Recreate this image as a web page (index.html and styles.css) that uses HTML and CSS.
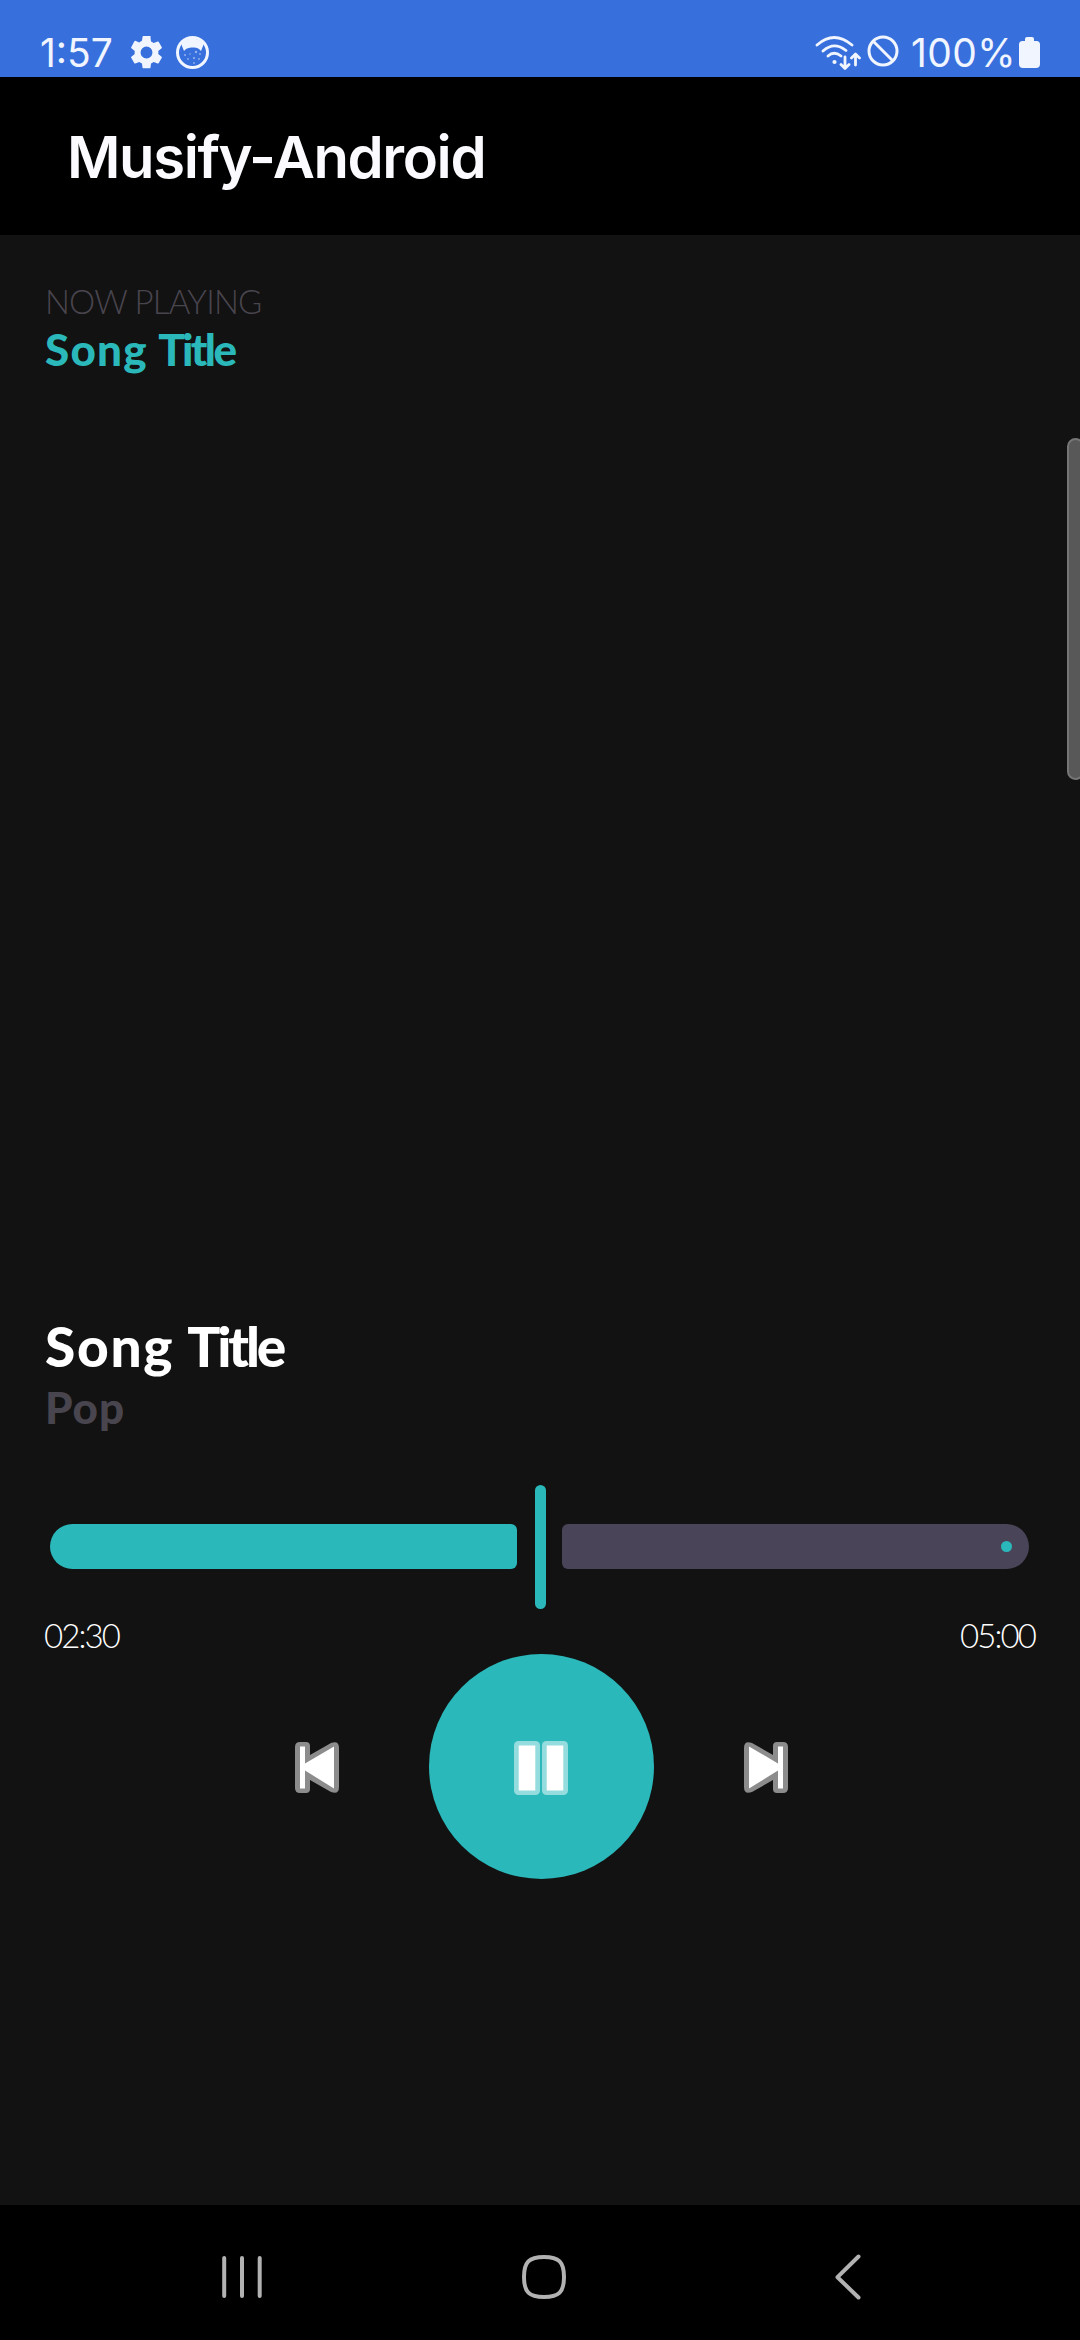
FILE: index.html
```html
<!DOCTYPE html>
<html lang="en">
<head>
<meta charset="utf-8">
<title>Musify-Android</title>
<link rel="stylesheet" href="styles.css">
</head>
<body>
<div class="screen">
  <div class="status">
    <span class="clock">1:57</span>
    <svg class="gear" width="33" height="33" viewBox="2 2 20 20"><path fill="currentColor" d="M19.14 12.94c.04-.3.06-.61.06-.94s-.02-.64-.07-.94l2.03-1.58a.49.49 0 0 0 .12-.61l-1.92-3.32a.49.49 0 0 0-.59-.22l-2.39.96a7 7 0 0 0-1.62-.94l-.36-2.54A.48.48 0 0 0 13.92 2h-3.84c-.24 0-.43.17-.47.41l-.36 2.54c-.59.24-1.13.57-1.62.94l-2.39-.96a.48.48 0 0 0-.59.22L2.74 8.87a.48.48 0 0 0 .12.61l2.03 1.58c-.05.3-.09.63-.09.94s.02.64.07.94l-2.03 1.58a.49.49 0 0 0-.12.61l1.92 3.32c.12.22.37.29.59.22l2.39-.96c.5.38 1.03.7 1.62.94l.36 2.54c.05.24.24.41.48.41h3.84c.24 0 .44-.17.47-.41l.36-2.54a7 7 0 0 0 1.62-.94l2.39.96c.22.08.47 0 .59-.22l1.92-3.32a.48.48 0 0 0-.12-.61zM12 15.6a3.6 3.6 0 1 1 0-7.2 3.6 3.6 0 0 1 0 7.2z"/></svg>
    <svg class="cat" width="33" height="33" viewBox="0 0 33 33"><circle cx="16.5" cy="16.5" r="15" fill="none" stroke="currentColor" stroke-width="3"/><path fill="currentColor" d="M5 7Q16 -2 28 7L27 10 25 15 23 13Q21 11 17 11.500Q13 11 10 13L8 15 6 10z"/><g fill="currentColor" opacity=".5"><circle cx="9" cy="19" r="1"/><circle cx="14" cy="18" r=".8"/><circle cx="20" cy="16" r="1.200"/><circle cx="24" cy="18" r=".9"/><circle cx="18" cy="22" r="1.100"/><circle cx="12" cy="23" r=".9"/><circle cx="23" cy="23" r=".9"/><circle cx="18" cy="27" r=".9"/></g></svg>
    <svg class="wifi" width="46" height="36" viewBox="0 0 46 36" fill="none" stroke="currentColor" stroke-width="2.800" stroke-linecap="round" stroke-linejoin="round"><path d="M2 10Q19 -5 37 10M8 16Q19 6 31 15.500M13 21Q19 15.500 26 21M30 22V33M26 29.500l4 4 4-4M40.500 30V19.500M36.500 23l4-4 4 4"/><circle cx="19.500" cy="27" r="2.100" fill="currentColor" stroke="none"/></svg>
    <svg class="ban" width="32" height="32" viewBox="0 0 32 32" fill="none" stroke="currentColor" stroke-width="3"><circle cx="16" cy="16" r="14"/><path d="M6 6l20 20"/></svg>
    <span class="percent">100%</span>
    <svg class="battery" width="21" height="31" viewBox="0 0 21 31"><path fill="currentColor" d="M6 4V2Q6 0 8 0h5q2 0 2 2v2h2.500Q21 4 21 7.500V27q0 4-4 4H4q-4 0-4-4V7.500Q0 4 3.500 4z"/></svg>
  </div>
  <header class="appbar"><h1>Musify-Android</h1></header>
  <main class="player">
    <div class="edge-handle"></div>
    <div class="now">NOW PLAYING</div>
    <div class="now-title"><span class="wide">Song</span> <span class="tight">Title</span></div>
    <div class="artwork"></div>
    <h2 class="song"><span class="wide">Song</span> <span class="tight">Title</span></h2>
    <div class="genre">Pop</div>
    <div class="slider">
      <div class="track played"></div>
      <div class="thumb"></div>
      <div class="track rest"><i class="stop"></i></div>
    </div>
    <div class="times"><span class="elapsed">02:30</span><span class="total">05:00</span></div>
    <div class="controls">
      <svg width="44" height="51" viewBox="0 0 44 51"><path fill="#8c8c8c" d="M5 0h6q4 0 4 4v9L36 1q8-3 8 5v39q0 8-8 5L15 38v9q0 4-4 4H5q-5 0-5-5V5q0-5 5-5z"/><path fill="#fff" d="M5 4.500h5v17L39 4.500v42L10 28.500v18H5z"/></svg>
      <div class="pause">
        <svg width="54" height="54" viewBox="0 0 54 54"><g fill="#94dcdd"><rect width="26" height="54" rx="4.500"/><rect x="28" width="26" height="54" rx="4.500"/></g><path fill="#fff" d="M4.700 4.500h16.600v45H4.700zM32.700 4.500h16.600v45H32.700z"/></svg>
      </div>
      <svg width="44" height="51" viewBox="0 0 44 51"><g transform="matrix(-1 0 0 1 44 0)"><path fill="#8c8c8c" d="M5 0h6q4 0 4 4v9L36 1q8-3 8 5v39q0 8-8 5L15 38v9q0 4-4 4H5q-5 0-5-5V5q0-5 5-5z"/><path fill="#fff" d="M5 4.500h5v17L39 4.500v42L10 28.500v18H5z"/></g></svg>
    </div>
  </main>
  <nav class="navbar">
    <svg width="40" height="44" viewBox="0 0 40 44"><path d="M2.200 3v38M20 3v38M37.700 3v38"/></svg>
    <svg width="44" height="44" viewBox="0 0 44 44"><path d="M22 2C37 2 42 7 42 22S37 42 22 42 2 37 2 22 7 2 22 2z"/></svg>
    <svg class="back" width="26" height="46" viewBox="0 0 26 46"><path d="M23.500 2.500L2.500 23.200l21 20.300"/></svg>
  </nav>
</div>
</body>
</html>
```
FILE: styles.css
```css
* { box-sizing: border-box; }
body { margin: 0; background: #000; }
svg { display: block; flex: none; }
.screen {
  width: 1080px;
  height: 2340px;
  display: flex;
  flex-direction: column;
  background: #121212;
  overflow: hidden;
}
.status {
  flex: none;
  height: 77px;
  padding: 28px 40px 0 40px;
  display: flex;
  align-items: center;
  background: #376fdd;
  color: #f0f5ff;
  font: 400 39px/48px Inter, sans-serif;
}
.clock { width: 90px; letter-spacing: 0; white-space: nowrap; }
.gear { margin-right: 13px; }
.wifi { margin-left: auto; margin-right: 6px; }
.ban { margin-top: -3px; margin-right: 12px; }
.percent { width: 108px; letter-spacing: 0.4px; white-space: nowrap; }
.appbar {
  flex: none;
  height: 158px;
  padding: 2px 0 0 67px;
  display: flex;
  align-items: center;
  background: #000;
}
.appbar h1 {
  margin: 0;
  color: #fbfaff;
  font: 600 58px/72px Inter, sans-serif;
  letter-spacing: -1.4px;
}
.player {
  position: relative;
  flex: 1;
  padding: 42px 45px 0;
  display: flex;
  flex-direction: column;
  font-family: Lato, sans-serif;
  color: #fff;
}
.edge-handle {
  position: absolute;
  right: -4px;
  top: 203px;
  width: 17px;
  height: 342px;
  border: 2px solid #767676;
  border-radius: 12px;
  background: #585858;
}
.now { font-size: 33px; line-height: 48px; font-weight: 300; letter-spacing: -0.8px; color: #49454f; }
.now-title { margin-top: -1px; font-size: 44px; line-height: 50px; font-weight: 900; color: #2bb8ba; }
.now-title .wide { letter-spacing: 1.2px; }
.now-title .tight { letter-spacing: -2.6px; }
.artwork { height: 942px; }
.song { margin: 0; font-size: 55px; line-height: 60px; font-weight: 900; }
.song .wide { letter-spacing: 1.7px; }
.song .tight { letter-spacing: -3.1px; }
.genre { margin-top: 6px; font-size: 44px; line-height: 50px; font-weight: 900; letter-spacing: 1px; color: #49454f; }
.slider {
  margin: 53px 6px 0 5px;
  height: 124px;
  display: flex;
  align-items: center;
}
.track { width: 467px; height: 45px; margin-bottom: 1px; }
.played { background: #2bb8ba; border-radius: 22.5px 6px 6px 22.5px; }
.rest {
  background: #4a4458;
  border-radius: 6px 22.5px 22.5px 6px;
  display: flex;
  align-items: center;
  justify-content: flex-end;
  padding-right: 17px;
}
.stop { width: 11px; height: 11px; border-radius: 50%; background: #2bb8ba; }
.thumb { width: 11px; height: 124px; margin: 0 16px 0 18px; border-radius: 6px; background: #2bb8ba; }
.times {
  margin-top: 6px;
  display: flex;
  justify-content: space-between;
  font-size: 33px;
  line-height: 40px;
  font-weight: 300;
  letter-spacing: -1.9px;
}
.elapsed { margin-left: -1px; }
.total { margin-right: 0; }
.controls { margin-top: -1px; display: flex; align-items: center; justify-content: center; gap: 90px; padding-left: 2px; }
.controls > svg { margin-top: 2px; }
.pause {
  width: 225px;
  height: 225px;
  padding-top: 2px;
  border-radius: 50%;
  background: #2bb8ba;
  display: flex;
  align-items: center;
  justify-content: center;
}
.navbar {
  flex: none;
  height: 135px;
  padding: 9px 0 0 222px;
  display: flex;
  align-items: center;
  gap: 260px;
  background: #000;
}
.navbar .back { margin-left: 9px; }
.navbar svg { fill: none; stroke: #b2b2b2; stroke-width: 4; stroke-linecap: round; stroke-linejoin: round; }
```
